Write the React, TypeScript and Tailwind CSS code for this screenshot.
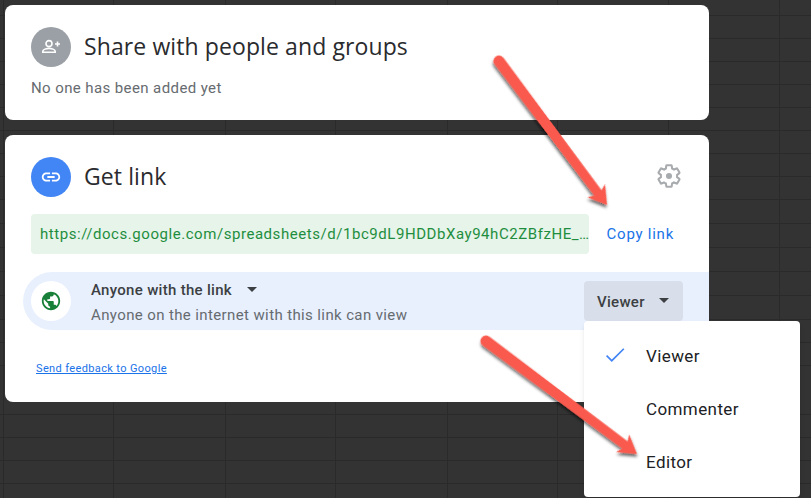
const H = [15,38,61,84,107,130,153,176,199,223,247,271,295,319,342,365,414,437,460,483];
const V = [3,113,225,335,447,557,668,779];

function Arrow({ x1, y1, x2, y2 }: { x1: number; y1: number; x2: number; y2: number }) {
  const deg = (Math.atan2(y2 - y1, x2 - x1) * 180) / Math.PI;
  const len = Math.hypot(x2 - x1, y2 - y1);
  return (
    <g transform={`translate(${x1} ${y1}) rotate(${deg})`} filter="url(#sh)">
      <path d={`M0 -5.500 L${len - 15} -4.500 L${len - 18} -11 L${len} 0 L${len - 18} 11 L${len - 15} 4.500 L0 5.500 A5.500 5.500 0 0 1 0 -5.500 Z`} fill="#fa5a4d" />
    </g>
  );
}

export default function App() {
  return (
    <div className="relative w-[811px] h-[498px] overflow-hidden bg-[#333333] font-['Roboto',sans-serif]">
      <svg className="absolute inset-0" width="811" height="498">
        {H.map((y) => <line key={y} x1="0" x2="811" y1={y + 0.5} y2={y + 0.5} stroke="#2a2a2a" />)}
        {V.map((x) => <line key={x} y1="0" y2="498" x1={x + 0.5} x2={x + 0.5} stroke="#2a2a2a" />)}
      </svg>

      <div className="relative flex flex-col gap-[15px] pt-[5px] pl-[5px] w-[709px]">
        <section className="bg-white rounded-[8px] h-[115px] pt-[22px] px-[26px]">
          <div className="flex items-center gap-[13px]">
            <div className="w-10 h-10 rounded-full bg-[#9aa0a6] flex items-center justify-center">
              <svg width="24" height="24" viewBox="0 0 24 24" fill="none" stroke="#fff" strokeWidth="1.6">
                <circle cx="10" cy="8.600" r="3" />
                <path d="M3.800 17.200v-1c0-1.800 3.800-2.800 6.200-2.800s6.200 1 6.200 2.800v1z" />
                <path d="M18.500 6.500v5M16 9h5" />
              </svg>
            </div>
            <h2 className="font-['Open_Sans',sans-serif] text-[23px] leading-[28px] tracking-[0.1px] pb-[2px] text-[#2a2b2e]">Share with people and groups</h2>
          </div>
          <p className="mt-[11px] text-[15px] leading-[20px] tracking-[0.4px] text-[#666b70]">No one has been added yet</p>
        </section>

        <section className="bg-white rounded-[8px] h-[267px] pt-[22px] pl-[26px]">
          <div className="flex items-center gap-[13px] pr-[27px]">
            <div className="w-10 h-10 rounded-full bg-[#4285f4] flex items-center justify-center">
              <svg width="22" height="22" viewBox="0 0 24 24" fill="#fff">
                <path d="M3.900 12c0-1.710 1.390-3.100 3.100-3.100h4V7H7c-2.760 0-5 2.240-5 5s2.240 5 5 5h4v-1.900H7c-1.710 0-3.100-1.390-3.100-3.100zM8 13h8v-2H8v2zm9-6h-4v1.900h4c1.710 0 3.100 1.390 3.100 3.100s-1.390 3.100-3.100 3.100h-4V17h4c2.760 0 5-2.240 5-5s-2.240-5-5-5z" />
              </svg>
            </div>
            <h2 className="font-['Open_Sans',sans-serif] text-[23px] leading-[28px] tracking-[0.1px] pb-[2px] text-[#2a2b2e] flex-1">Get link</h2>
            <svg width="26" height="26" viewBox="0 0 24 24" fill="none" stroke="#a8abae" strokeWidth="1.900" className="-mt-[2px]">
              <path d="M19.430 12.980c.04-.32.070-.640.070-.980s-.030-.660-.070-.980l2.110-1.650c.190-.150.240-.420.120-.640l-2-3.460c-.120-.220-.390-.300-.610-.220l-2.490 1c-.520-.400-1.080-.730-1.690-.980l-.380-2.650A.488.488 0 0 0 14 2h-4c-.250 0-.460.180-.490.420l-.380 2.650c-.610.250-1.170.590-1.690.980l-2.490-1c-.230-.090-.490 0-.610.220l-2 3.460c-.130.220-.070.490.120.640l2.110 1.650c-.040.320-.070.650-.070.980s.030.660.070.980l-2.110 1.650c-.190.150-.240.420-.120.640l2 3.460c.120.220.390.300.610.220l2.490-1c.520.400 1.080.730 1.690.980l.380 2.650c.030.240.240.420.490.420h4c.250 0 .460-.180.490-.420l.380-2.650c.610-.250 1.170-.590 1.690-.980l2.490 1c.230.090.490 0 .610-.220l2-3.460c.120-.220.070-.490-.120-.640l-2.110-1.650z" />
              <circle cx="12" cy="12" r="2.800" fill="#a8abae" stroke="none" />
            </svg>
          </div>

          <div className="mt-[17px] flex items-center pr-[35px]">
            <div className="w-[558px] h-10 rounded-[4px] bg-[#e6f4ea] flex items-center px-[9px] text-[15px] tracking-[0.55px] text-[#1e8e3e] whitespace-nowrap overflow-hidden">
              https://docs.google.com/spreadsheets/d/1bc9dL9HDDbXay94hC2ZBfzHE_…
            </div>
            <button className="ml-auto text-[15px] tracking-[0.75px] font-normal text-[#1a73e8]">Copy link</button>
          </div>

          <div className="mt-[18px] -ml-[8px] h-[58px] rounded-l-[29px] bg-[#e8f0fe] flex items-center pl-[8px]">
            <div className="w-10 h-10 rounded-full bg-white flex items-center justify-center">
              <svg width="22" height="22" viewBox="0 0 24 24" fill="#188038">
                <path d="M12 2C6.480 2 2 6.480 2 12s4.480 10 10 10 10-4.480 10-10S17.520 2 12 2zm-1 17.930c-3.950-.490-7-3.850-7-7.930 0-.620.080-1.210.210-1.790L9 15v1c0 1.100.900 2 2 2v1.930zm6.900-2.540c-.260-.810-1-1.390-1.900-1.390h-1v-3c0-.550-.450-1-1-1H8v-2h2c.550 0 1-.450 1-1V7h2c1.100 0 2-.900 2-2v-.410c2.930 1.190 5 4.060 5 7.410 0 2.080-.800 3.970-2.100 5.390z" />
              </svg>
            </div>
            <div className="ml-[20px] w-[340px] pt-[2px]">
              <div className="flex items-center text-[15px] leading-[20px] font-medium tracking-[0.3px] text-[#3c4043]">
                Anyone with the link
                <span className="ml-[15px] w-0 h-0 border-x-[5px] border-x-transparent border-t-[5px] border-t-[#3c4043]" />
              </div>
              <div className="mt-[5px] text-[15px] leading-[20px] tracking-[0.38px] text-[#666b70]">Anyone on the internet with this link can view</div>
            </div>
            <div className="ml-auto mr-[26px] w-[99px] h-10 rounded-[4px] bg-[#d8dfeb] flex items-center pl-[13px] text-[15px] font-medium tracking-[0.3px] text-[#3c4043]">
              <span className="pt-[3px]">Viewer</span>
              <span className="ml-[14px] -mt-[1px] w-0 h-0 border-x-[5px] border-x-transparent border-t-[5px] border-t-[#3c4043]" />
            </div>
          </div>

          <a className="block mt-[31px] ml-[5px] text-[11px] leading-[16px] tracking-[0.37px] text-[#1a73e8] underline">Send feedback to Google</a>
        </section>
      </div>

      <div className="absolute left-[584px] top-[321px] w-[216px] h-[176px] rounded-[4px] bg-white shadow-md text-[#202124] text-[17px] tracking-[0.4px]">
        <div className="h-[53px] mt-[9px] flex items-center relative pl-[62px]">
          <svg className="absolute left-[18px] top-[12px]" width="26" height="26" viewBox="0 0 24 24" fill="#4285f4">
            <path d="M9 16.200 4.800 12l-1.100 1.100L9 18.500 20.700 6.800l-1.100-1.100z" />
          </svg>
          Viewer
        </div>
        <div className="h-[53px] flex items-center pl-[62px]">Commenter</div>
        <div className="h-[53px] flex items-center pl-[62px]">Editor</div>
      </div>

      <svg className="absolute inset-0 pointer-events-none" width="811" height="498">
        <defs>
          <filter id="sh" x="-20%" y="-20%" width="140%" height="140%">
            <feDropShadow dx="2" dy="2" stdDeviation="1.800" floodColor="#000" floodOpacity="0.6" />
          </filter>
        </defs>
        <Arrow x1={499} y1={61} x2={607} y2={205} />
        <Arrow x1={486} y1={341} x2={637} y2={454} />
      </svg>
    </div>
  );
}
